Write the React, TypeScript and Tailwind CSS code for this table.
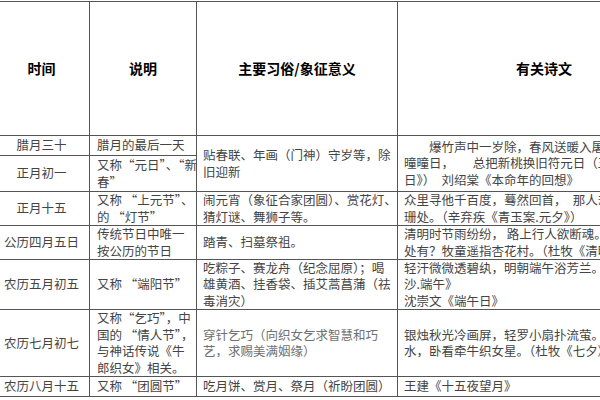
import React from "react";

const cellBase =
  "border-r border-b border-[#555] flex items-center overflow-hidden whitespace-nowrap";

function Lines({ lines }: { lines: string[] }) {
  return (
    <div className="leading-[16.5px]">
      {lines.map((l, i) => (
        <div key={i}>{l}</div>
      ))}
    </div>
  );
}

export default function App() {
  return (
    <div className="w-[600px] h-[400px] overflow-hidden bg-white font-['Noto_Sans_CJK_SC',sans-serif]">
      <div className="mt-px -ml-[6px] w-[697px] border-t border-[#555] grid grid-cols-[96px_107px_201px_293px] grid-rows-[134px_20px_36px_34px_34px_50px_67px_20px] text-[12.5px] text-[#444]">
        {/* header */}
        <div className={`${cellBase} justify-center text-[14px] font-bold text-black`}>时间</div>
        <div className={`${cellBase} justify-center text-[14px] font-bold text-black`}>说明</div>
        <div className={`${cellBase} justify-center text-[14px] font-bold text-black`}>主要习俗/象征意义</div>
        <div className={`${cellBase} justify-center text-[14px] font-bold text-black`}>有关诗文</div>

        {/* row 1 */}
        <div className={`${cellBase} justify-center`}>腊月三十</div>
        <div className={`${cellBase} pl-[7px]`}>腊月的最后一天</div>
        <div className={`${cellBase} row-span-2 pl-[6px]`}>
          <Lines lines={["贴春联、年画（门神）守岁等，除", "旧迎新"]} />
        </div>
        <div className={`${cellBase} row-span-2 pl-[6px]`}>
          <Lines
            lines={[
              "\u3000\u3000爆竹声中一岁除，春风送暖入屠苏。千门万户",
              "曈曈日，\u3000\u3000总把新桃换旧符元日（王安石《元",
              "日》）\u3000刘绍棠《本命年的回想》",
            ]}
          />
        </div>

        {/* row 2 */}
        <div className={`${cellBase} justify-center`}>正月初一</div>
        <div className={`${cellBase} pl-[7px]`}>
          <Lines lines={["又称“元日”、“新", "春”"]} />
        </div>

        {/* row 3 */}
        <div className={`${cellBase} justify-center`}>正月十五</div>
        <div className={`${cellBase} pl-[7px]`}>
          <Lines lines={["又称 “上元节”、", "的 “灯节”"]} />
        </div>
        <div className={`${cellBase} pl-[6px]`}>
          <Lines lines={["闹元宵（象征合家团圆）、赏花灯、", "猜灯谜、舞狮子等。"]} />
        </div>
        <div className={`${cellBase} pl-[6px]`}>
          <Lines
            lines={[
              "众里寻他千百度，蓦然回首，\u3000那人却在灯火阑",
              "珊处。（辛弃疾《青玉案.元夕》）",
            ]}
          />
        </div>

        {/* row 4 */}
        <div className={`${cellBase} justify-center`}>公历四月五日</div>
        <div className={`${cellBase} pl-[7px]`}>
          <Lines lines={["传统节日中唯一", "按公历的节日"]} />
        </div>
        <div className={`${cellBase} pl-[6px]`}>踏青、扫墓祭祖。</div>
        <div className={`${cellBase} pl-[6px]`}>
          <Lines
            lines={[
              "清明时节雨纷纷， 路上行人欲断魂。借问酒家何",
              "处有？牧童遥指杏花村。（杜牧《清明》）",
            ]}
          />
        </div>

        {/* row 5 */}
        <div className={`${cellBase} justify-center`}>农历五月初五</div>
        <div className={`${cellBase} pl-[7px]`}>又称 “端阳节”</div>
        <div className={`${cellBase} pl-[6px]`}>
          <Lines
            lines={[
              "吃粽子、赛龙舟（纪念屈原）；喝",
              "雄黄酒、挂香袋、插艾蒿菖蒲（祛",
              "毒消灾）",
            ]}
          />
        </div>
        <div className={`${cellBase} pl-[6px]`}>
          <Lines
            lines={[
              "轻汗微微透碧纨，明朝端午浴芳兰。（苏轼《浣溪",
              "沙.端午》",
              "沈崇文《端午日》",
            ]}
          />
        </div>

        {/* row 6 */}
        <div className={`${cellBase} justify-center`}>农历七月初七</div>
        <div className={`${cellBase} pl-[7px]`}>
          <Lines
            lines={["又称“乞巧”，中", "国的 “情人节”，", "与神话传说《牛", "郎织女》相关。"]}
          />
        </div>
        <div className={`${cellBase} pl-[6px] text-[#707070]`}>
          <Lines lines={["穿针乞巧（向织女乞求智慧和巧", "艺，求赐美满姻缘）"]} />
        </div>
        <div className={`${cellBase} pl-[6px]`}>
          <Lines
            lines={[
              "银烛秋光冷画屏，轻罗小扇扑流萤。天阶夜色凉如",
              "水，卧看牵牛织女星。（杜牧《七夕》）",
            ]}
          />
        </div>

        {/* row 7 */}
        <div className={`${cellBase} justify-center`}>农历八月十五</div>
        <div className={`${cellBase} pl-[7px]`}>又称 “团圆节”</div>
        <div className={`${cellBase} pl-[6px]`}>吃月饼、赏月、祭月（祈盼团圆）</div>
        <div className={`${cellBase} pl-[6px]`}>王建《十五夜望月》</div>
      </div>
    </div>
  );
}
